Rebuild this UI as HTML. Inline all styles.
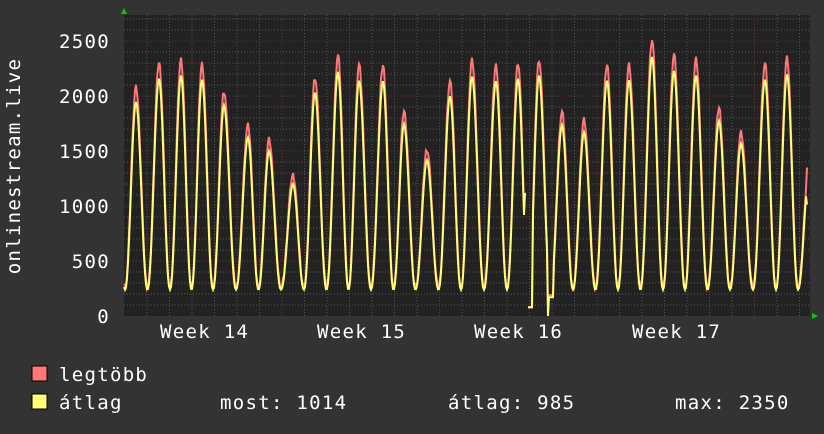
<!DOCTYPE html><html><head><style>
body{margin:0;background:#333;width:824px;height:430px;overflow:hidden;font-family:"DejaVu Sans Mono","Liberation Mono",monospace;}
svg text{font-family:"DejaVu Sans Mono","Liberation Mono",monospace;fill:#fff;font-size:19px;letter-spacing:1.3px}
</style></head><body>
<svg id="g" width="824" height="430" xmlns="http://www.w3.org/2000/svg">
<rect width="824" height="430" fill="#333"/>
<rect x="124" y="15" width="686" height="301" fill="#222"/>
<g id="grid"></g>
<path id="mx" fill="none" stroke="#ff7777" stroke-width="2"/>
<path id="av" fill="none" stroke="#ffff77" stroke-width="2"/>
<polygon points="121,14 127,14 124,8" fill="#0c0"/>
<polygon points="812,313 812,319 818,316" fill="#0c0"/>
<g text-anchor="end">
<text x="110" y="48">2500</text><text x="110" y="103">2000</text><text x="110" y="158">1500</text><text x="110" y="213">1000</text><text x="110" y="268">500</text><text x="110" y="323">0</text></g>
<text x="160" y="338">Week 14</text>
<text x="317" y="338">Week 15</text>
<text x="474" y="338">Week 16</text>
<text x="632" y="338">Week 17</text>
<text transform="translate(20,166) rotate(-90)" text-anchor="middle">onlinestream.live</text>
<rect x="32" y="366" width="15" height="15" fill="#ff7777" stroke="#000"/>
<rect x="32" y="394" width="15" height="15" fill="#ffff77" stroke="#000"/>
<text x="59" y="381">legtöbb</text>
<text x="59" y="409">átlag</text>
<text x="220" y="409">most: 1014</text>
<text x="448" y="409">átlag: 985</text>
<text x="675" y="409">max: 2350</text>
</svg>
<script>
var g=document.getElementById('grid'),s='';
for(var v=100;v<2800;v+=100){var y=316-v*0.11;if(y<15)break;s+='<line x1="124" x2="810" y1="'+y+'" y2="'+y+'" stroke="'+(v%500?'#555':'#663333')+'" stroke-dasharray="1,2"/>';}
for(var x=147;x<810;x+=22.5){var red=Math.abs(((x-282)%157.5+157.5)%157.5)<1;s+='<line y1="15" y2="316" x1="'+x+'" x2="'+x+'" stroke="'+(red?'#663333':'#555')+'" stroke-dasharray="1,2"/>';}
g.innerHTML=s;
var P=[[114,2055],[136,2055],[159,2280],[181,2310],[202,2270],[224,2020],[248,1710],[269,1580],[293,1260],[315,2145],[338,2345],[359,2260],[383,2255],[404,1840],[427,1490],[450,2110],[472,2300],[496,2255],[518,2280],[539,2310],[562,1830],[584,1760],[607,2260],[629,2265],[652,2490],[674,2355],[696,2310],[719,1870],[741,1650],[765,2270],[787,2320],[809,1350],[831,1350]];
function gsh(u){return Math.pow((1+Math.cos(Math.PI*u))/2,1.1);}
function val(x){
 var i=0;while(i<P.length-2&&P[i+1][0]<=x)i++;
 var a=P[i],b=P[i+1],t=(x-a[0])/(b[0]-a[0]),base=240;
 return t<0.5?base+(a[1]-base)*gsh(t*2):base+(b[1]-base)*gsh((1-t)*2);
}
var M='',A='',pen=false;
for(var x=124;x<=807;x++){
 if(x>=526&&x<=527){pen=false;continue;}
 var v=val(x),m=v+((x*37)%7)*8,a=240+(v-240)*0.94;
 if(x==525){a=1120;m=1120;}
 if(x>=528&&x<=532){a=80;m=80;}
 if(x==548){a=0;m=60;}
 if(x>=549&&x<=553){a=Math.min(a,170);m=Math.min(m,190);}
 if(x==807){m=1350;a=1014;}
 var ym=316-m*0.11,ya=316-a*0.11,c=pen?'L':'M';pen=true;
 M+=c+x+','+ym.toFixed(1);A+=c+x+','+ya.toFixed(1);
}
document.getElementById('mx').setAttribute('d',M);
document.getElementById('av').setAttribute('d',A);
</script>
</body></html>
